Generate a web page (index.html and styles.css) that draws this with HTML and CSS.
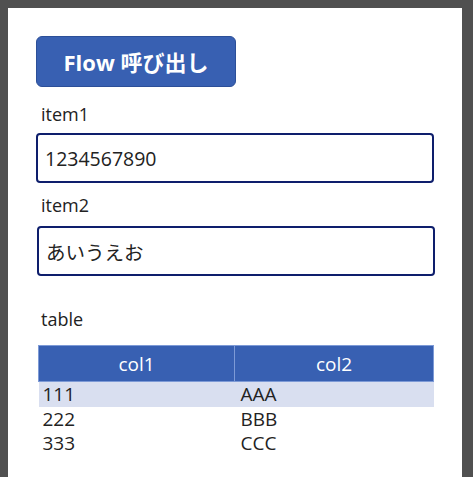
FILE: index.html
```html
<!DOCTYPE html>
<html lang="ja">

<head>
  <meta charset="utf-8">
  <title>Flow 呼び出し</title>
  <link rel="stylesheet" href="styles.css">
</head>

<body>
  <div class="screen">
    <button class="flowButton" type="button">Flow 呼び出し</button>

    <div class="fieldLabel first">item1</div>
    <input class="textInput" type="text" value="1234567890">

    <div class="fieldLabel">item2</div>
    <input class="textInput second" type="text" value="あいうえお">

    <div class="fieldLabel tableLabel">table</div>
    <table class="dataTable">
      <thead>
        <tr>
          <th class="c1">col1</th>
          <th class="c2">col2</th>
        </tr>
      </thead>
      <tbody>
        <tr class="selected">
          <td>111</td>
          <td>AAA</td>
        </tr>
        <tr>
          <td>222</td>
          <td>BBB</td>
        </tr>
        <tr>
          <td>333</td>
          <td>CCC</td>
        </tr>
      </tbody>
    </table>
  </div>
</body>

</html>
```

FILE: styles.css
```css
* {
    box-sizing: border-box;
    font-family: "Open Sans", "Noto Sans CJK JP", sans-serif;
}

html, body {
    margin: 0;
    height: 100%;
}

body {
    background-color: #505050;
    padding: 8px 11px 0 8px;
    overflow: hidden;
}

.screen {
    background-color: white;
    height: 100%;
    padding: 28px 0 0 28px;
    color: #222222;
}

.flowButton {
    display: block;
    width: 200px;
    height: 51px;
    margin: 0;
    background-color: #3860b2;
    border: 1px solid #2c4f98;
    border-radius: 6px;
    color: white;
    font-size: 22px;
    font-weight: bold;
    line-height: 30px;
    padding: 0;
}

.fieldLabel {
    height: 30px;
    line-height: 30px;
    font-size: 18px;
    padding-left: 5px;
    margin: 7px 0 6px;
}

.fieldLabel.first {
    margin: 12px 0 4px;
}

.textInput {
    display: block;
    width: 398px;
    height: 50px;
    margin: 0;
    border: 2px solid #0e1e6c;
    border-radius: 4px;
    padding: 0 7px;
    font-size: 19.5px;
    color: #222222;
    background: white;
    outline: none;
}

.textInput.second {
    margin-left: 1px;
}

.tableLabel {
    margin: 28px 0 11px;
}

.dataTable {
    margin-left: 2px;
    width: 396px;
    border-collapse: collapse;
    table-layout: fixed;
}

.dataTable th {
    background-color: #3860b2;
    color: white;
    font-weight: normal;
    font-size: 19px;
    height: 36px;
    padding: 0;
    border: 1px solid #7d9ad6;
}

.dataTable th.c1 {
    width: 196px;
}

.dataTable td {
    font-size: 19px;
    height: 24px;
    line-height: 24px;
    padding: 0 0 0 4px;
}

.dataTable td + td {
    padding-left: 6px;
}

.dataTable tr.selected td {
    background-color: #d9dff0;
    height: 25px;
}
```
